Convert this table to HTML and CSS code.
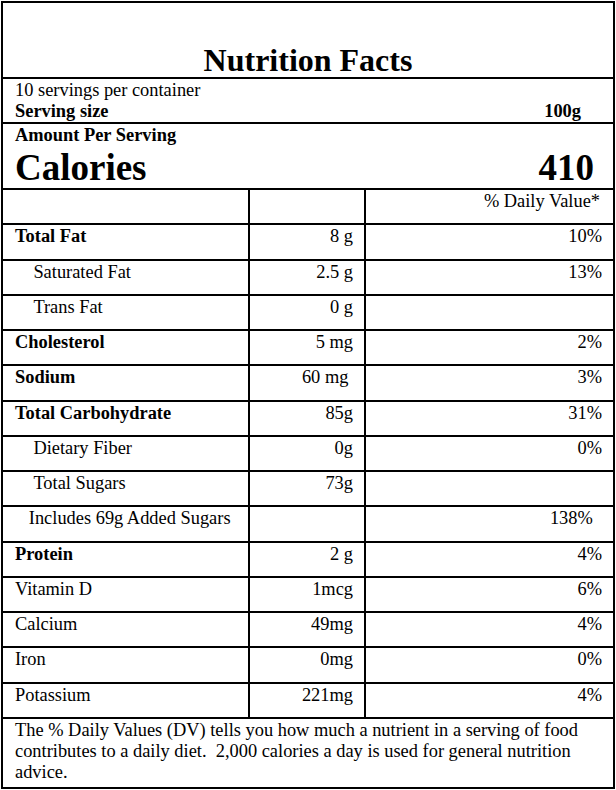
FILE: index.html
```html
<!DOCTYPE html>
<html lang="en">
<head>
<meta charset="utf-8">
<title>Nutrition Facts</title>
<link rel="stylesheet" href="styles.css">
</head>
<body>
<div class="label">
  <header class="head">
    <h1 class="title">Nutrition Facts</h1>
  </header>
  <section class="serving">
    <p>10 servings per container</p>
    <p class="serving__size"><span>Serving size</span><span>100g</span></p>
  </section>
  <section class="cal">
    <p class="cal__label">Amount Per Serving</p>
    <p class="cal__row"><span>Calories</span><span>410</span></p>
  </section>
  <div class="facts">
    <div class="row"><div class="cell"></div><div class="cell"></div><div class="cell cell--dv">% Daily Value*</div></div>
    <div class="row"><div class="cell cell--main">Total Fat</div><div class="cell">8 g</div><div class="cell">10%</div></div>
    <div class="row"><div class="cell cell--sub">Saturated Fat</div><div class="cell">2.5 g</div><div class="cell">13%</div></div>
    <div class="row"><div class="cell cell--sub">Trans Fat</div><div class="cell">0 g</div><div class="cell"></div></div>
    <div class="row"><div class="cell cell--main">Cholesterol</div><div class="cell">5 mg</div><div class="cell">2%</div></div>
    <div class="row"><div class="cell cell--main">Sodium</div><div class="cell cell--trail1">60 mg</div><div class="cell">3%</div></div>
    <div class="row"><div class="cell cell--main">Total Carbohydrate</div><div class="cell">85g</div><div class="cell">31%</div></div>
    <div class="row"><div class="cell cell--sub">Dietary Fiber</div><div class="cell">0g</div><div class="cell">0%</div></div>
    <div class="row"><div class="cell cell--sub">Total Sugars</div><div class="cell">73g</div><div class="cell"></div></div>
    <div class="row"><div class="cell cell--sub3">Includes 69g Added Sugars</div><div class="cell"></div><div class="cell cell--trail2">138%</div></div>
    <div class="row"><div class="cell cell--main">Protein</div><div class="cell">2 g</div><div class="cell">4%</div></div>
    <div class="row"><div class="cell">Vitamin D</div><div class="cell">1mcg</div><div class="cell">6%</div></div>
    <div class="row"><div class="cell">Calcium</div><div class="cell">49mg</div><div class="cell">4%</div></div>
    <div class="row"><div class="cell">Iron</div><div class="cell">0mg</div><div class="cell">0%</div></div>
    <div class="row"><div class="cell">Potassium</div><div class="cell">221mg</div><div class="cell">4%</div></div>
  </div>
  <p class="note">The % Daily Values (DV) tells you how much a nutrient in a serving of food contributes to a daily diet.&nbsp; 2,000 calories a day is used for general nutrition advice.</p>
</div>
</body>
</html>
```
FILE: styles.css
```css
html, body {
  margin: 0;
  padding: 0;
  background: #fff;
}

body {
  font-family: "Liberation Serif", "Times New Roman", serif;
  font-size: 18.4px;
  line-height: normal;
  color: #000;
}

p {
  margin: 0;
}

.label {
  margin: 1px 0 0 1px;
  width: 614px;
  height: 788px;
  box-sizing: border-box;
  border: 2px solid #000;
}

.head {
  height: 74px;
  box-sizing: border-box;
  padding-top: 39px;
  text-align: center;
}

.title {
  margin: 0;
  font-size: 32px;
  font-weight: bold;
  line-height: normal;
}

.serving {
  height: 45px;
  box-sizing: border-box;
  border-top: 2px solid #000;
  padding: 1px 12px 0;
  overflow: hidden;
}

.serving__size {
  display: flex;
  justify-content: space-between;
  padding-right: 20px;
  font-weight: bold;
}

.cal {
  height: 66px;
  box-sizing: border-box;
  border-top: 2px solid #000;
  padding: 1px 12px 0;
  font-weight: bold;
  overflow: hidden;
}

.cal__row {
  display: flex;
  justify-content: space-between;
  padding-right: 7px;
  font-size: 37px;
}

.row {
  display: grid;
  grid-template-columns: 245px 116px 1fr;
  height: 35.27px;
  box-sizing: border-box;
  border-top: 2px solid #000;
}

.cell {
  padding: 1px 11px 0 12px;
}

.cell + .cell {
  border-left: 2px solid #000;
  text-align: right;
}

.cell--main {
  font-weight: bold;
}

.cell--sub {
  padding-left: calc(12px + 1em);
}

.cell--sub3 {
  padding-left: calc(12px + 0.75em);
}

.cell--dv {
  padding-right: 13px;
}

.cell--trail1 {
  padding-right: calc(11px + 0.25em);
}

.cell--trail2 {
  padding-right: calc(11px + 0.5em);
}

.note {
  border-top: 2px solid #000;
  padding: 1px 12px 0;
}
```
